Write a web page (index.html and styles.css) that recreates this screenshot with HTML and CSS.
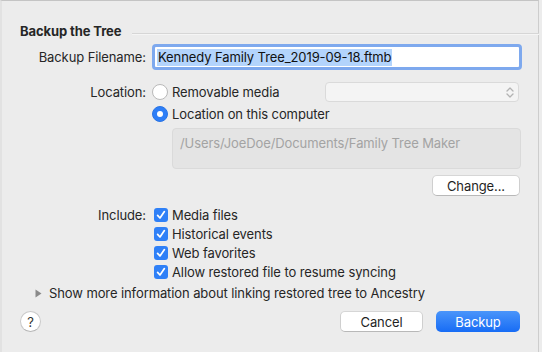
FILE: index.html
```html
<!DOCTYPE html>
<html>
<head>
<meta charset="utf-8">
<link rel="stylesheet" href="styles.css">
</head>
<body>
<div class="window">
  <div class="head"><span class="title">Backup the Tree</span><span class="rule"></span></div>

  <div class="row r-file">
    <span class="lbl">Backup Filename:</span>
    <div class="field"><span class="sel">Kennedy Family Tree_2019-09-18.ftmb</span></div>
  </div>

  <div class="row r-loc">
    <span class="lbl">Location:</span>
    <div class="opt"><span class="radio"></span><span>Removable media</span></div>
    <div class="popup">
      <svg class="chev" width="8" height="13" viewBox="0 0 8 13"><path d="M1 5 L4 2 L7 5 M1 8 L4 11 L7 8" fill="none" stroke="#b3b3b3" stroke-width="1.3" stroke-linecap="round" stroke-linejoin="round"/></svg>
    </div>
  </div>

  <div class="row r-loc2">
    <span class="lbl"></span>
    <div class="opt"><span class="radio on"></span><span>Location on this computer</span></div>
  </div>

  <div class="pathbox">/Users/JoeDoe/Documents/Family Tree Maker</div>

  <div class="changerow"><span class="btn">Change...</span></div>

  <div class="includes">
    <div class="row crow">
      <span class="lbl">Include:</span>
      <div class="opt"><span class="check"><svg width="14" height="14" viewBox="0 0 14 14"><path d="M3.6 7.4 L6 10 L10.4 3.6" fill="none" stroke="#fff" stroke-width="1.7" stroke-linecap="round" stroke-linejoin="round"/></svg></span><span>Media files</span></div>
    </div>
    <div class="row crow">
      <span class="lbl"></span>
      <div class="opt"><span class="check"><svg width="14" height="14" viewBox="0 0 14 14"><path d="M3.6 7.4 L6 10 L10.4 3.6" fill="none" stroke="#fff" stroke-width="1.7" stroke-linecap="round" stroke-linejoin="round"/></svg></span><span>Historical events</span></div>
    </div>
    <div class="row crow">
      <span class="lbl"></span>
      <div class="opt"><span class="check"><svg width="14" height="14" viewBox="0 0 14 14"><path d="M3.6 7.4 L6 10 L10.4 3.6" fill="none" stroke="#fff" stroke-width="1.7" stroke-linecap="round" stroke-linejoin="round"/></svg></span><span>Web favorites</span></div>
    </div>
    <div class="row crow">
      <span class="lbl"></span>
      <div class="opt"><span class="check"><svg width="14" height="14" viewBox="0 0 14 14"><path d="M3.6 7.4 L6 10 L10.4 3.6" fill="none" stroke="#fff" stroke-width="1.7" stroke-linecap="round" stroke-linejoin="round"/></svg></span><span>Allow restored file to resume syncing</span></div>
    </div>
  </div>

  <div class="disclosure">
    <svg width="7" height="9" viewBox="0 0 7 9"><path d="M0.5 0.5 L6.5 4.5 L0.5 8.5 Z" fill="#8a8a8a"/></svg>
    <span>Show more information about linking restored tree to Ancestry</span>
  </div>

  <div class="footer">
    <span class="help">?</span>
    <span class="spacer"></span>
    <span class="btn cancel">Cancel</span>
    <span class="btn primary">Backup</span>
  </div>
</div>
</body>
</html>
```

FILE: styles.css
```css
html, body {
  margin: 0;
  padding: 0;
  background: #ececec;
}
body {
  font-family: Inter, "Liberation Sans", sans-serif;
  font-size: 13px;
  letter-spacing: -0.1px;
  color: #262626;
  width: 542px;
  height: 352px;
  overflow: hidden;
}
.window {
  box-sizing: border-box;
  width: 539px;
  height: 352px;
  border-top: 1px solid #c4c4c4;
  border-right: 1px solid #cdcdcd;
  border-left: 2px solid #e2e2e2;
  background: #ececec;
}
.head {
  display: flex;
  align-items: center;
  height: 16px;
  margin-top: 22px;
  padding-left: 18px;
}
.title {
  font-weight: 700;
  line-height: 16px;
}
.rule {
  flex: 1;
  height: 0;
  border-top: 1px solid #d6d6d6;
  border-bottom: 1px solid #f5f5f5;
  margin-left: 11px;
  margin-top: 6px;
  margin-right: -1px;
}
.row {
  display: flex;
  align-items: center;
}
.lbl {
  width: 144px;
  flex: none;
  text-align: right;
  margin-right: 6px;
}
.r-file {
  margin-top: 5px;
  height: 26px;
}
.field {
  box-sizing: border-box;
  width: 370px;
  height: 26px;
  border: 3px solid #7ea9ee;
  border-radius: 4px;
  background: #fff;
  padding-left: 2px;
  display: flex;
  align-items: center;
  color: #111;
}
.sel {
  background: #b3d4fc;
  line-height: 17px;
  padding: 0 1px;
}
.r-loc {
  margin-top: 12px;
  height: 20px;
}
.r-loc2 {
  margin-top: 2px;
  height: 20px;
}
.opt {
  display: flex;
  align-items: center;
}
.radio {
  box-sizing: border-box;
  width: 16px;
  height: 16px;
  border-radius: 50%;
  background: #fff;
  border: 1px solid #b9b9b9;
  margin-right: 4px;
  position: relative;
  flex: none;
}
.radio.on {
  background: #2d7ef7;
  border-color: #2a74e4;
}
.radio.on::after {
  content: "";
  position: absolute;
  left: 4px;
  top: 4px;
  width: 6px;
  height: 6px;
  border-radius: 50%;
  background: #fff;
}
.popup {
  box-sizing: border-box;
  margin-left: auto;
  margin-right: 19px;
  width: 194px;
  height: 20px;
  border: 1px solid #dadada;
  border-radius: 4px;
  background: #f4f4f4;
  display: flex;
  align-items: center;
  justify-content: flex-end;
  padding-right: 4px;
}
.pathbox {
  box-sizing: border-box;
  margin-top: 4px;
  margin-left: 170px;
  width: 349px;
  height: 41px;
  border: 1px solid #dadada;
  border-radius: 4px;
  background: #e4e4e4;
  color: #a3a3a3;
  padding: 6px 0 0 7px;
  line-height: 16px;
}
.changerow {
  display: flex;
  justify-content: flex-end;
  margin-top: 6px;
  margin-right: 18px;
}
.btn {
  box-sizing: border-box;
  display: inline-flex;
  align-items: center;
  justify-content: center;
  height: 21px;
  border-radius: 5px;
  background: #fff;
  border: 1px solid #cfcfcf;
  border-top-color: #d6d6d6;
  border-bottom-color: #b8b8b8;
  color: #1f1f1f;
}
.changerow .btn {
  width: 88px;
}
.includes {
  margin-top: 9px;
}
.crow {
  height: 19px;
}
.check {
  width: 14px;
  height: 14px;
  border-radius: 3px;
  background: #2f80f7;
  margin-left: 2px;
  margin-right: 4px;
  flex: none;
  display: block;
}
.check svg {
  display: block;
}
.disclosure {
  display: flex;
  align-items: center;
  height: 18px;
  margin-top: 3px;
  padding-left: 33px;
}
.disclosure svg {
  margin-right: 7px;
}
.footer {
  display: flex;
  align-items: center;
  margin-top: 9px;
  padding-left: 18px;
  padding-right: 18px;
  height: 21px;
}
.help {
  box-sizing: border-box;
  width: 21px;
  height: 21px;
  border-radius: 50%;
  background: #fff;
  border: 1px solid #c9c9c9;
  border-bottom-color: #b5b5b5;
  display: flex;
  align-items: center;
  justify-content: center;
  font-size: 13px;
  color: #333;
}
.spacer {
  flex: 1;
}
.cancel {
  width: 83px;
  margin-right: 13px;
}
.primary {
  width: 84px;
  border: none;
  color: #fff;
  background: linear-gradient(#4a95fa, #176cf5);
}
```
